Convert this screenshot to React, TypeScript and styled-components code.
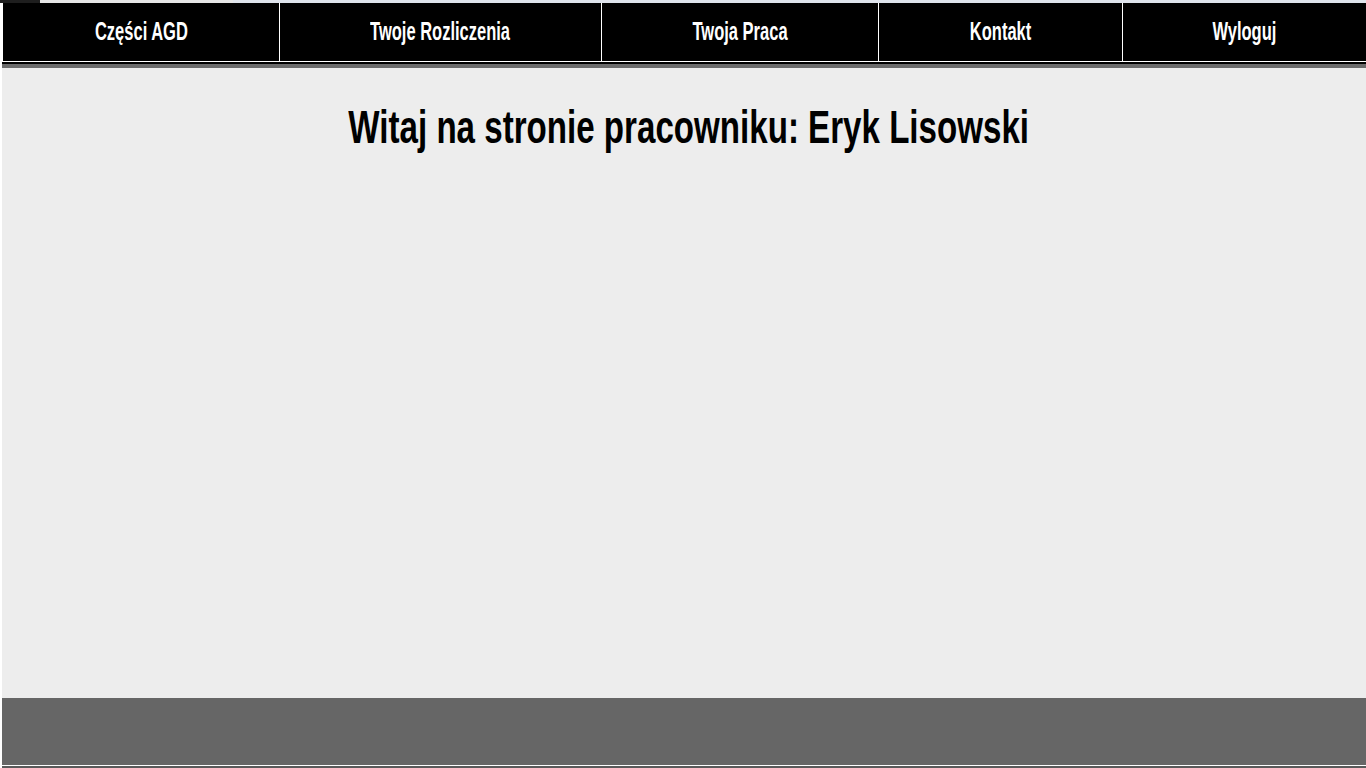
import React from 'react';
import styled, { createGlobalStyle } from 'styled-components';

const GlobalStyle = createGlobalStyle`
  html, body {
    margin: 0;
    padding: 0;
    background: #ffffff;
  }
  body {
    font-family: "Liberation Sans", Arial, sans-serif;
  }
`;

const links = [
  { label: 'Części AGD', width: '276px' },
  { label: 'Twoje Rozliczenia', width: '321px' },
  { label: 'Twoja Praca', width: '276px' },
  { label: 'Kontakt', width: '243px' },
  { label: 'Wyloguj', width: '1fr' },
];

export default function App() {
  return (
    <>
      <GlobalStyle />
      <Page>
        <TopStrip>
          <StripPart $bg="#1e1e1e" $w="40px" />
          <StripPart $bg="#e6e6e6" $w="193px" />
          <StripPart $bg="#dfe4ec" $w="auto" />
        </TopStrip>
        <Nav $cols={links.map((l) => l.width).join(' ')}>
          {links.map((l) => (
            <NavCell key={l.label} href="#">
              <NavLabel>{l.label}</NavLabel>
            </NavCell>
          ))}
        </Nav>
        <NavShadow />
        <Main>
          <Heading>Witaj na stronie pracowniku: Eryk Lisowski</Heading>
        </Main>
        <Footer />
        <BottomEdge />
      </Page>
    </>
  );
}

const Page = styled.div`
  display: flex;
  flex-direction: column;
  height: 768px;
  padding-left: 2px;
  box-sizing: border-box;
  overflow: hidden;
`;

const TopStrip = styled.div`
  display: flex;
  height: 3px;
  margin-left: -2px;
`;

const StripPart = styled.div<{ $bg: string; $w: string }>`
  background: ${(p) => p.$bg};
  width: ${(p) => p.$w};
  flex: ${(p) => (p.$w === 'auto' ? '1' : 'none')};
`;

const Nav = styled.nav<{ $cols: string }>`
  display: grid;
  grid-template-columns: ${(p) => p.$cols};
  gap: 1px;
  background: #ffffff;
  padding: 0 0 1px 1px;
`;

const NavCell = styled.a`
  display: flex;
  align-items: center;
  justify-content: center;
  height: 58px;
  background: #000000;
  color: #ffffff;
  text-decoration: none;
`;

const NavLabel = styled.span`
  display: inline-block;
  font-weight: bold;
  font-size: 25px;
  transform: scaleX(0.66);
  white-space: nowrap;
  margin-top: -2px;
`;

const NavShadow = styled.div`
  height: 2px;
  background: #000000;
  border-bottom: 4px solid #6b6b6b;
`;

const Main = styled.main`
  flex: 1;
  background: #ededed;
  display: flex;
  flex-direction: column;
  align-items: center;
`;

const Heading = styled.h1`
  margin: 32px 0 0 10px;
  font-size: 46px;
  font-weight: bold;
  color: #000000;
  white-space: nowrap;
  transform: scaleX(0.72);
`;

const Footer = styled.footer`
  height: 67px;
  background: #666666;
  flex: none;
`;

const BottomEdge = styled.div`
  height: 1px;
  border-bottom: 2px solid #5a5a5a;
  background: #ffffff;
  flex: none;
`;
